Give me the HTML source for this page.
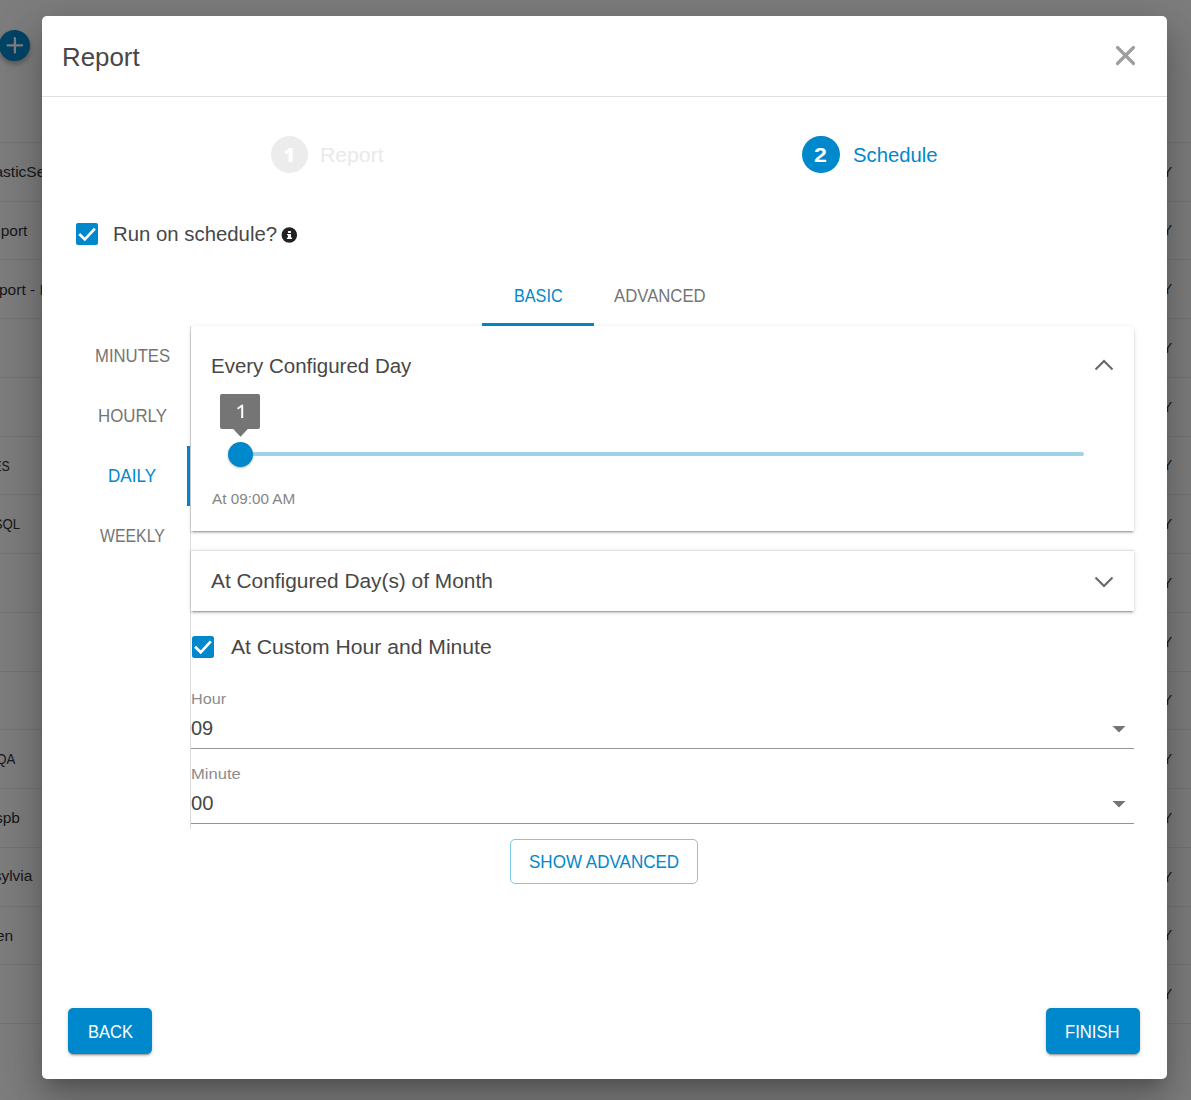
<!DOCTYPE html>
<html><head><meta charset="utf-8">
<style>
*{box-sizing:border-box;margin:0;padding:0}
html,body{width:1191px;height:1100px;overflow:hidden;background:#fff;font-family:"Liberation Sans",sans-serif}
.a{position:absolute;white-space:nowrap;line-height:1}
.c{transform-origin:0 0}
</style></head><body>

<div class="a" style="left:0;top:0;width:1191px;height:1100px;background:#fafafa;overflow:hidden">
<div class="a" style="left:0px;top:142px;width:1191px;height:1px;background:#e8e8e8"></div>
<div class="a" style="left:0px;top:201px;width:1191px;height:1px;background:#e8e8e8"></div>
<div class="a" style="left:0px;top:259px;width:1191px;height:1px;background:#e8e8e8"></div>
<div class="a" style="left:0px;top:318px;width:1191px;height:1px;background:#e8e8e8"></div>
<div class="a" style="left:0px;top:377px;width:1191px;height:1px;background:#e8e8e8"></div>
<div class="a" style="left:0px;top:436px;width:1191px;height:1px;background:#e8e8e8"></div>
<div class="a" style="left:0px;top:494px;width:1191px;height:1px;background:#e8e8e8"></div>
<div class="a" style="left:0px;top:553px;width:1191px;height:1px;background:#e8e8e8"></div>
<div class="a" style="left:0px;top:612px;width:1191px;height:1px;background:#e8e8e8"></div>
<div class="a" style="left:0px;top:671px;width:1191px;height:1px;background:#e8e8e8"></div>
<div class="a" style="left:0px;top:729px;width:1191px;height:1px;background:#e8e8e8"></div>
<div class="a" style="left:0px;top:788px;width:1191px;height:1px;background:#e8e8e8"></div>
<div class="a" style="left:0px;top:847px;width:1191px;height:1px;background:#e8e8e8"></div>
<div class="a" style="left:0px;top:906px;width:1191px;height:1px;background:#e8e8e8"></div>
<div class="a" style="left:0px;top:964px;width:1191px;height:1px;background:#e8e8e8"></div>
<div class="a" style="left:0px;top:1023px;width:1191px;height:1px;background:#e8e8e8"></div>
<div class="a" style="left:-1px;top:29.5px;width:31px;height:31px;border-radius:50%;background:#0088cc;box-shadow:0 3px 5px rgba(0,0,0,.3)"></div>
<svg class="a" style="left:0;top:30px" width="30" height="30" viewBox="0 0 30 30"><path d="M7.6 15.3H22.2M14.9 8.1V22.6" stroke="#fff" stroke-width="2.3" stroke-linecap="round"/></svg>
<div class="a" style="left:-5.50px;top:163.88px;font-size:15.5px;color:#333;font-weight:normal;">asticSearch Report</div>
<div class="a" style="right:1163.60px;top:222.88px;font-size:15.5px;color:#333;text-align:right;transform-origin:100% 0;transform:scaleX(1.0)">port</div>
<div class="a" style="left:-1.00px;top:281.88px;font-size:15.5px;color:#333;font-weight:normal;">port - I</div>
<div class="a" style="right:1181.70px;top:457.88px;font-size:15.5px;color:#333;text-align:right;transform-origin:100% 0;transform:scaleX(0.8)">ES</div>
<div class="a" style="right:1170.80px;top:516.38px;font-size:15.5px;color:#333;text-align:right;transform-origin:100% 0;transform:scaleX(0.85)">SQL</div>
<div class="a" style="right:1175.30px;top:750.88px;font-size:15.5px;color:#333;text-align:right;transform-origin:100% 0;transform:scaleX(0.85)">QA</div>
<div class="a" style="right:1171.10px;top:809.88px;font-size:15.5px;color:#333;text-align:right;transform-origin:100% 0;transform:scaleX(1.0)">spb</div>
<div class="a" style="right:1158.60px;top:868.48px;font-size:15.5px;color:#333;text-align:right;transform-origin:100% 0;transform:scaleX(1.0)">sylvia</div>
<div class="a" style="right:1177.80px;top:927.88px;font-size:15.5px;color:#333;text-align:right;transform-origin:100% 0;transform:scaleX(1.0)">en</div>
<div class="a" style="left:1162.50px;top:164.73px;font-size:14.5px;color:#333;font-weight:normal;">Y</div>
<div class="a" style="left:1162.50px;top:223.48px;font-size:14.5px;color:#333;font-weight:normal;">Y</div>
<div class="a" style="left:1162.50px;top:282.23px;font-size:14.5px;color:#333;font-weight:normal;">Y</div>
<div class="a" style="left:1162.50px;top:340.98px;font-size:14.5px;color:#333;font-weight:normal;">Y</div>
<div class="a" style="left:1162.50px;top:399.73px;font-size:14.5px;color:#333;font-weight:normal;">Y</div>
<div class="a" style="left:1162.50px;top:458.48px;font-size:14.5px;color:#333;font-weight:normal;">Y</div>
<div class="a" style="left:1162.50px;top:517.23px;font-size:14.5px;color:#333;font-weight:normal;">Y</div>
<div class="a" style="left:1162.50px;top:575.98px;font-size:14.5px;color:#333;font-weight:normal;">Y</div>
<div class="a" style="left:1162.50px;top:634.73px;font-size:14.5px;color:#333;font-weight:normal;">Y</div>
<div class="a" style="left:1162.50px;top:693.48px;font-size:14.5px;color:#333;font-weight:normal;">Y</div>
<div class="a" style="left:1162.50px;top:752.23px;font-size:14.5px;color:#333;font-weight:normal;">Y</div>
<div class="a" style="left:1162.50px;top:810.98px;font-size:14.5px;color:#333;font-weight:normal;">Y</div>
<div class="a" style="left:1162.50px;top:869.73px;font-size:14.5px;color:#333;font-weight:normal;">Y</div>
<div class="a" style="left:1162.50px;top:928.48px;font-size:14.5px;color:#333;font-weight:normal;">Y</div>
<div class="a" style="left:1162.50px;top:987.23px;font-size:14.5px;color:#333;font-weight:normal;">Y</div>
</div>
<div class="a" style="left:0px;top:0px;width:1191px;height:1100px;background:rgba(0,0,0,.5)"></div>
<div class="a" style="left:42px;top:16px;width:1125px;height:1063px;background:#fff;border-radius:5px;box-shadow:0 11px 15px -7px rgba(0,0,0,.2),0 24px 38px 3px rgba(0,0,0,.14),0 9px 46px 8px rgba(0,0,0,.12)"></div>
<div class="a c" style="left:61.81px;top:44px;font-size:26px;color:#474747;font-weight:normal;transform:scaleX(0.9944);">Report</div>
<svg class="a" style="left:1110px;top:40px" width="30" height="30" viewBox="0 0 30 30"><path d="M7.5 7.5L23.5 23.5M23.5 7.5L7.5 23.5" stroke="#9e9e9e" stroke-width="3.2" stroke-linecap="round"/></svg>
<div class="a" style="left:42px;top:96px;width:1125px;height:1px;background:#e0e0e0"></div>
<div class="a" style="left:271px;top:136px;width:37px;height:37px;border-radius:50%;background:#ececec"></div>
<svg class="a" style="left:280px;top:144px" width="16" height="20" viewBox="280 144 16 20"><path d="M288.6 162.1H292.7V147.9H289.4L284.3 151.9L286.1 154.4L288.6 152.4Z" fill="#fff"/></svg>
<div class="a c" style="left:320.28px;top:145px;font-size:20.5px;color:#e9e9e9;font-weight:normal;transform:scaleX(1.0330);">Report</div>
<div class="a" style="left:802.2px;top:135.8px;width:37.6px;height:37.6px;border-radius:50%;background:#0088cc"></div>
<div class="a c" style="left:814.45px;top:144px;font-size:21px;color:#fff;font-weight:bold;transform:scaleX(1.1023);">2</div>
<div class="a c" style="left:852.56px;top:145px;font-size:20.5px;color:#0088cc;font-weight:normal;transform:scaleX(0.9887);">Schedule</div>
<div class="a" style="left:76px;top:223px;width:22px;height:22px;border-radius:2px;background:#0088cc"></div>
<svg class="a" style="left:76px;top:223px" width="22" height="22" viewBox="0 0 22 22"><path d="M3.2 11L8.8 16.4L18.9 5.6" fill="none" stroke="#fff" stroke-width="2.7"/></svg>
<div class="a c" style="left:112.54px;top:224px;font-size:20.5px;color:#474747;font-weight:normal;transform:scaleX(0.9928);">Run on schedule?</div>
<svg class="a" style="left:280px;top:226px" width="18" height="18" viewBox="0 0 18 18"><circle cx="9.3" cy="8.9" r="7.75" fill="#222"/><rect x="7.9" y="4.9" width="3.1" height="2" rx="0.6" fill="#fff"/><path d="M7 8H11V11.6H12V13.1H6.9V11.6H8V9.3H7Z" fill="#fff"/></svg>
<div class="a c" style="left:514.07px;top:287px;font-size:18.5px;color:#0088cc;font-weight:normal;transform:scaleX(0.8758);">BASIC</div>
<div class="a c" style="left:613.91px;top:287px;font-size:18.5px;color:#757575;font-weight:normal;transform:scaleX(0.9038);">ADVANCED</div>
<div class="a" style="left:482px;top:323px;width:112px;height:3px;background:#0088cc"></div>
<div class="a c" style="left:94.64px;top:347px;font-size:18.5px;color:#757575;font-weight:normal;transform:scaleX(0.9018);">MINUTES</div>
<div class="a c" style="left:97.85px;top:407px;font-size:18.5px;color:#757575;font-weight:normal;transform:scaleX(0.9098);">HOURLY</div>
<div class="a c" style="left:108.20px;top:467px;font-size:18.5px;color:#0088cc;font-weight:normal;transform:scaleX(0.9224);">DAILY</div>
<div class="a c" style="left:99.65px;top:527px;font-size:18.5px;color:#757575;font-weight:normal;transform:scaleX(0.8559);">WEEKLY</div>
<div class="a" style="left:190px;top:326px;width:1px;height:503px;background:#dcdcdc"></div>
<div class="a" style="left:187px;top:446px;width:3px;height:60px;background:#0088cc"></div>
<div class="a" style="left:191px;top:326px;width:943px;height:205px;background:#fff;border-radius:5px 5px 0 0;box-shadow:0 3px 1px -2px rgba(0,0,0,.2),0 2px 2px 0 rgba(0,0,0,.14),0 1px 5px 0 rgba(0,0,0,.12)"></div>
<div class="a c" style="left:210.96px;top:356px;font-size:20.5px;color:#474747;font-weight:normal;transform:scaleX(0.9989);">Every Configured Day</div>
<svg class="a" style="left:1090px;top:350px" width="28" height="28" viewBox="0 0 28 28"><path d="M5.5 19.5L14 11L22.5 19.5" fill="none" stroke="#6b6b6b" stroke-width="2.2"/></svg>
<div class="a" style="left:241px;top:451.6px;width:843px;height:4.8px;background:#9fd2e9;border-radius:2.4px"></div>
<div class="a" style="left:228.2px;top:441.5px;width:25px;height:25px;border-radius:50%;background:#0088cc;box-shadow:0 1px 2px rgba(0,0,0,.3)"></div>
<div class="a" style="left:220.3px;top:394.3px;width:40px;height:34.8px;background:#757575;border-radius:2px"></div>
<svg class="a" style="left:230px;top:428px" width="21" height="10" viewBox="0 0 21 10"><path d="M2.7 0.5L10.5 8.8L18.3 0.5Z" fill="#757575"/></svg>
<svg class="a" style="left:234px;top:402px" width="12" height="18" viewBox="234 402 12 18"><path d="M241.2 418H243.2V404.8H241.6L237.1 408L238 409.6L241.2 407.3Z" fill="#fff"/></svg>
<div class="a c" style="left:211.67px;top:491px;font-size:15.3px;color:#858585;font-weight:normal;transform:scaleX(0.9990);">At 09:00 AM</div>
<div class="a" style="left:191px;top:550px;width:943px;height:61px;background:#fff;border-top:1px solid #e0e0e0;box-shadow:0 3px 1px -2px rgba(0,0,0,.2),0 2px 2px 0 rgba(0,0,0,.14),0 1px 5px 0 rgba(0,0,0,.12)"></div>
<div class="a c" style="left:210.63px;top:571px;font-size:20.5px;color:#474747;font-weight:normal;transform:scaleX(1.0178);">At Configured Day(s) of Month</div>
<svg class="a" style="left:1090px;top:568px" width="28" height="28" viewBox="0 0 28 28"><path d="M5.5 9.5L14 18L22.5 9.5" fill="none" stroke="#6b6b6b" stroke-width="2.2"/></svg>
<div class="a" style="left:192px;top:636px;width:22px;height:22px;border-radius:2.5px;background:#0088cc"></div>
<svg class="a" style="left:192px;top:636px" width="22" height="22" viewBox="0 0 22 22"><path d="M3.1 10.8L8.7 16.3L18.8 5.3" fill="none" stroke="#fff" stroke-width="2.7"/></svg>
<div class="a c" style="left:230.66px;top:637px;font-size:20.5px;color:#474747;font-weight:normal;transform:scaleX(1.0308);">At Custom Hour and Minute</div>
<div class="a c" style="left:190.85px;top:691px;font-size:15.3px;color:#8c8c8c;font-weight:normal;transform:scaleX(1.0598);">Hour</div>
<div class="a c" style="left:190.63px;top:719px;font-size:19.5px;color:#474747;font-weight:normal;transform:scaleX(1.0258);">09</div>
<div class="a" style="left:191px;top:748px;width:943px;height:1px;background:#949494"></div>
<svg class="a" style="left:1112px;top:726px" width="14" height="7" viewBox="0 0 14 7"><path d="M0.5 0L13.5 0L7 6.5Z" fill="#757575"/></svg>
<div class="a c" style="left:190.81px;top:766px;font-size:15.3px;color:#8c8c8c;font-weight:normal;transform:scaleX(1.0840);">Minute</div>
<div class="a c" style="left:190.66px;top:794px;font-size:19.5px;color:#474747;font-weight:normal;transform:scaleX(1.0370);">00</div>
<div class="a" style="left:191px;top:823px;width:943px;height:1px;background:#949494"></div>
<svg class="a" style="left:1112px;top:801px" width="14" height="7" viewBox="0 0 14 7"><path d="M0.5 0L13.5 0L7 6.5Z" fill="#757575"/></svg>
<div class="a" style="left:510px;top:839px;width:188px;height:45px;border:1px solid #80c4e6;border-radius:5px"></div>
<div class="a c" style="left:528.68px;top:853px;font-size:18.5px;color:#0088cc;font-weight:normal;transform:scaleX(0.9206);">SHOW ADVANCED</div>
<div class="a" style="left:68px;top:1008px;width:84px;height:46px;background:#0088cc;border-radius:5px;box-shadow:0 3px 1px -2px rgba(0,0,0,.2),0 2px 2px 0 rgba(0,0,0,.14),0 1px 5px 0 rgba(0,0,0,.12)"></div>
<div class="a c" style="left:88.00px;top:1023px;font-size:18.5px;color:#fff;font-weight:normal;transform:scaleX(0.8934);">BACK</div>
<div class="a" style="left:1046px;top:1008px;width:94px;height:46px;background:#0088cc;border-radius:5px;box-shadow:0 3px 1px -2px rgba(0,0,0,.2),0 2px 2px 0 rgba(0,0,0,.14),0 1px 5px 0 rgba(0,0,0,.12)"></div>
<div class="a c" style="left:1065.38px;top:1023px;font-size:18.5px;color:#fff;font-weight:normal;transform:scaleX(0.8995);">FINISH</div>
</body></html>
